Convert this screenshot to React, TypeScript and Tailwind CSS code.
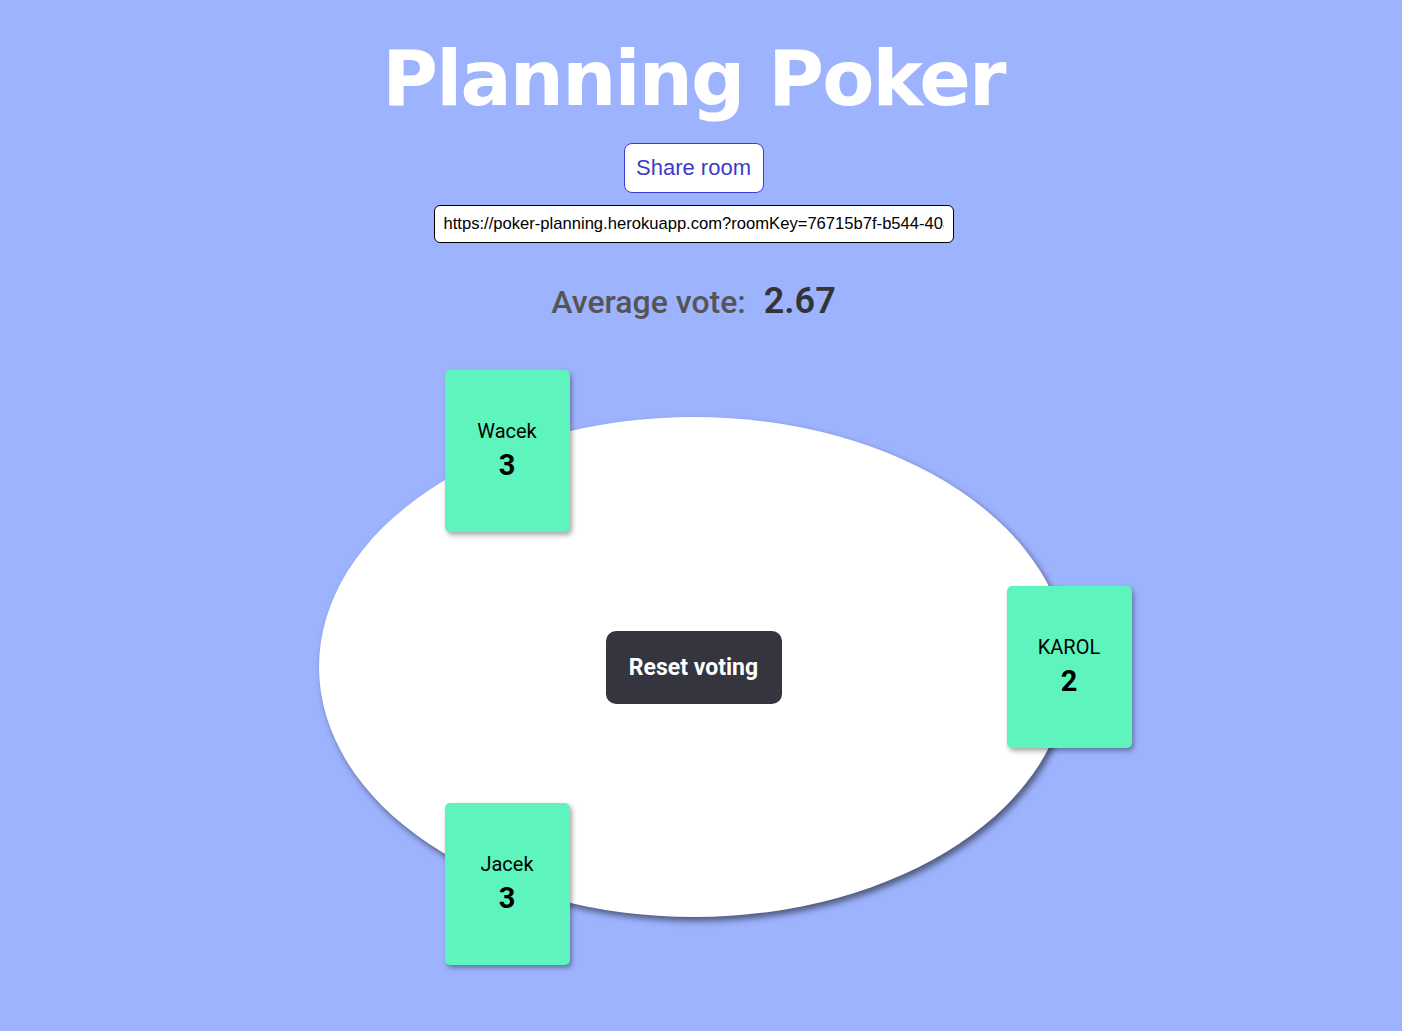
import React from "react";

type Player = { name: string; vote: number; pos: string };

const players: Player[] = [
  { name: "Wacek", vote: 3, pos: "left-[126px] top-[-47px]" },
  { name: "KAROL", vote: 2, pos: "left-[688px] top-[169px]" },
  { name: "Jacek", vote: 3, pos: "left-[126px] top-[386px]" },
];

function PlayerCard({ player }: { player: Player }) {
  return (
    <div
      className={`absolute ${player.pos} w-[125px] h-[162px] rounded-[5px] bg-[#5df5bd] shadow-[2px_3px_5px_rgba(0,0,0,0.35)] flex flex-col items-center justify-center`}
    >
      <span className="text-[20px] leading-none text-black mb-[10px]">{player.name}</span>
      <span className="text-[29px] leading-none font-bold text-black">{player.vote}</span>
      <span className="h-[2px]" />
    </div>
  );
}

export default function App() {
  const average = (players.reduce((s, p) => s + p.vote, 0) / players.length).toFixed(2);

  return (
    <div className="min-h-screen bg-[#9db3fe] flex flex-col items-center pr-[15px] font-['Roboto',sans-serif]">
      <h1 className="mt-[41px] text-[76px] leading-none font-bold text-white tracking-[-1.8px] font-['DejaVu_Sans',sans-serif]">
        Planning Poker
      </h1>

      <button className="mt-[26px] w-[140px] h-[50px] bg-white border border-[#3b3bcf] rounded-[8px] text-[22px] text-[#3c3cc8] font-['Liberation_Sans',Arial,sans-serif] pb-[2px]">
        Share room
      </button>

      <input
        readOnly
        value="https://poker-planning.herokuapp.com?roomKey=76715b7f-b544-40a1-9b1e-4f3c2d0e8a77"
        className="mt-[12px] w-[520px] h-[38px] bg-white border border-black rounded-[6px] px-[9px] text-[16.6px] text-black font-['Liberation_Sans',Arial,sans-serif] outline-none"
      />

      <div className="mt-[40px] flex items-baseline leading-none">
        <span className="text-[32px] font-medium text-[#555555]">Average vote:</span>
        <span className="ml-[18px] text-[36px] font-semibold text-[#333338]">{average}</span>
      </div>

      <div className="relative mt-[98px] w-[750px] h-[500px]">
        <div className="w-full h-full rounded-[50%] bg-white shadow-[3px_4px_6px_rgba(0,0,0,0.5)] flex items-center justify-center">
          <button className="w-[176px] h-[73px] rounded-[10px] bg-[#35353f] text-white text-[23px] font-bold pt-[3px]">
            Reset voting
          </button>
        </div>
        {players.map((p) => (
          <PlayerCard key={p.name} player={p} />
        ))}
      </div>
      <div className="h-[60px]" />
    </div>
  );
}
